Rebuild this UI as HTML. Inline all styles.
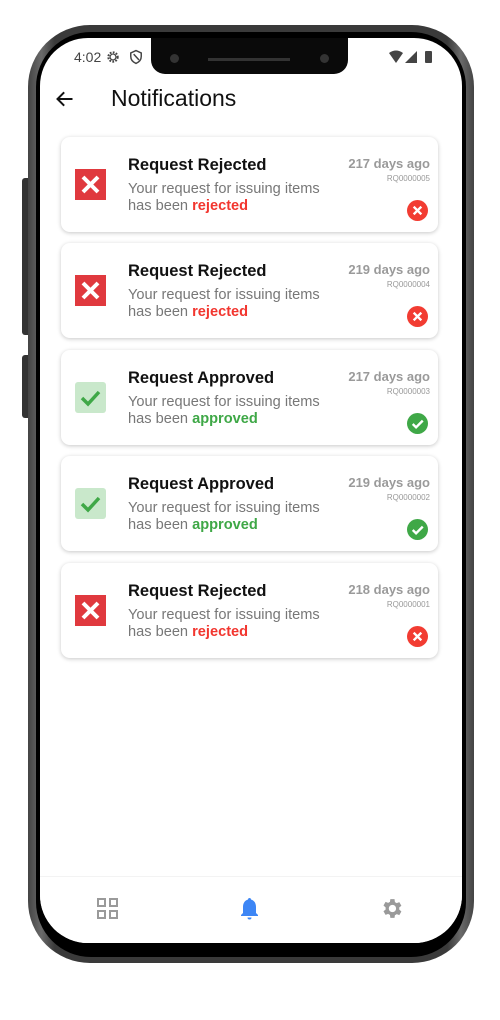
<!DOCTYPE html>
<html><head><meta charset="utf-8"><style>
*{margin:0;padding:0;box-sizing:border-box}
body{width:500px;height:1020px;background:#fff;position:relative;overflow:hidden;font-family:"Liberation Sans",sans-serif}
.abs{position:absolute}
.card{position:absolute;left:61px;width:377px;height:95px;background:#fff;border-radius:9px;box-shadow:0 1px 4px rgba(0,0,0,.22)}
.ic{position:absolute;left:14px;top:32px;width:31px;height:31px}
.t{position:absolute;left:67px;top:19px;font-size:16.5px;font-weight:bold;color:#111}
.s{position:absolute;left:67px;top:44px;font-size:14.6px;line-height:17px;color:#777}
.r{color:#f2362f;font-weight:bold}.g{color:#3fa847;font-weight:bold}
.d{position:absolute;right:8px;top:19px;font-size:13px;color:#9a9a9a;font-weight:bold}
.q{position:absolute;right:8px;top:37px;font-size:8px;color:#999}
.st{position:absolute;right:10px;top:63px;width:21px;height:21px}
</style></head><body>
<div class="abs" style="left:22px;top:178px;width:10px;height:157px;background:#333;border-radius:3px"></div>
<div class="abs" style="left:22px;top:355px;width:10px;height:63px;background:#333;border-radius:3px"></div>
<div class="abs" style="left:28px;top:25px;width:446px;height:938px;background:linear-gradient(90deg,#444,#6a6a6a 3%,#3a3a3a 6%,#3a3a3a 94%,#6a6a6a 97%,#444);border-radius:62px"></div>
<div class="abs" style="left:36px;top:32px;width:430px;height:925px;background:#000;border-radius:55px"></div>
<div class="abs" style="left:40px;top:38px;width:422px;height:905px;background:#fff;border-radius:48px;overflow:hidden">
 <div class="abs" style="left:0;top:838px;width:422px;height:67px;background:#fff;border-top:1px solid #f3f3f3"></div>
</div>
<div class="abs" style="left:151px;top:38px;width:197px;height:36px;background:#0a0a0a;border-radius:0 0 14px 14px"></div>
<div class="abs" style="left:170px;top:54px;width:9px;height:9px;border-radius:50%;background:#333"></div>
<div class="abs" style="left:320px;top:54px;width:9px;height:9px;border-radius:50%;background:#333"></div>
<div class="abs" style="left:208px;top:58px;width:82px;height:3px;background:#333"></div>
<div class="abs" style="left:74px;top:49px;font-size:14px;color:#444">4:02</div>
<svg class="abs" style="left:106px;top:50px" width="14" height="14" viewBox="0 0 24 24"><circle cx="12" cy="12" r="8" fill="none" stroke="#444" stroke-width="3.5" stroke-dasharray="3 2.3"/><circle cx="12" cy="12" r="5" fill="none" stroke="#444" stroke-width="2"/></svg>
<svg class="abs" style="left:129px;top:49px" width="14" height="16" viewBox="0 0 24 26"><path d="M12 2L3 6v6c0 6 4 10 9 12 5-2 9-6 9-12V6z" fill="none" stroke="#444" stroke-width="2.5"/><path d="M8 8l9 10" stroke="#444" stroke-width="2.5"/></svg>
<svg class="abs" style="left:389px;top:50px" width="48" height="14" viewBox="0 0 48 14"><path d="M0 3Q7-2 14 3L7 13z" fill="#444"/><path d="M16 13L28 1V13z" fill="#444"/><rect x="36" y="1" width="7" height="12" rx="1" fill="#444"/></svg>
<svg class="abs" style="left:55px;top:89px" width="20" height="20" viewBox="0 0 24 24"><path d="M21 12H4M11 4l-8 8 8 8" fill="none" stroke="#111" stroke-width="2.4"/></svg>
<div class="abs" style="left:111px;top:85px;font-size:23px;color:#111">Notifications</div>

<div class="card" style="top:137px"><svg class="ic" viewBox="0 0 31 31"><rect width="31" height="31" fill="#e0393e"/><path d="M8 8l15 15M23 8L8 23" stroke="#fff" stroke-width="4"/></svg><div class="t">Request Rejected</div><div class="s">Your request for issuing items<br>has been <span class="r">rejected</span></div><div class="d">217 days ago</div><div class="q">RQ0000005</div><svg class="st" viewBox="0 0 22 22"><circle cx="11" cy="11" r="11" fill="#f23c32"/><path d="M7 7l8 8M15 7l-8 8" stroke="#fff" stroke-width="2.5"/></svg></div>
<div class="card" style="top:243px"><svg class="ic" viewBox="0 0 31 31"><rect width="31" height="31" fill="#e0393e"/><path d="M8 8l15 15M23 8L8 23" stroke="#fff" stroke-width="4"/></svg><div class="t">Request Rejected</div><div class="s">Your request for issuing items<br>has been <span class="r">rejected</span></div><div class="d">219 days ago</div><div class="q">RQ0000004</div><svg class="st" viewBox="0 0 22 22"><circle cx="11" cy="11" r="11" fill="#f23c32"/><path d="M7 7l8 8M15 7l-8 8" stroke="#fff" stroke-width="2.5"/></svg></div>
<div class="card" style="top:350px"><svg class="ic" viewBox="0 0 31 31"><rect width="31" height="31" rx="3" fill="#c9e8cb"/><path d="M7 16l6 6 11-12" fill="none" stroke="#3fa847" stroke-width="3.5"/></svg><div class="t">Request Approved</div><div class="s">Your request for issuing items<br>has been <span class="g">approved</span></div><div class="d">217 days ago</div><div class="q">RQ0000003</div><svg class="st" viewBox="0 0 22 22"><circle cx="11" cy="11" r="11" fill="#3fa847"/><path d="M6 11.5l3.5 3.5 7-7" fill="none" stroke="#fff" stroke-width="2.5"/></svg></div>
<div class="card" style="top:456px"><svg class="ic" viewBox="0 0 31 31"><rect width="31" height="31" rx="3" fill="#c9e8cb"/><path d="M7 16l6 6 11-12" fill="none" stroke="#3fa847" stroke-width="3.5"/></svg><div class="t">Request Approved</div><div class="s">Your request for issuing items<br>has been <span class="g">approved</span></div><div class="d">219 days ago</div><div class="q">RQ0000002</div><svg class="st" viewBox="0 0 22 22"><circle cx="11" cy="11" r="11" fill="#3fa847"/><path d="M6 11.5l3.5 3.5 7-7" fill="none" stroke="#fff" stroke-width="2.5"/></svg></div>
<div class="card" style="top:563px"><svg class="ic" viewBox="0 0 31 31"><rect width="31" height="31" fill="#e0393e"/><path d="M8 8l15 15M23 8L8 23" stroke="#fff" stroke-width="4"/></svg><div class="t">Request Rejected</div><div class="s">Your request for issuing items<br>has been <span class="r">rejected</span></div><div class="d">218 days ago</div><div class="q">RQ0000001</div><svg class="st" viewBox="0 0 22 22"><circle cx="11" cy="11" r="11" fill="#f23c32"/><path d="M7 7l8 8M15 7l-8 8" stroke="#fff" stroke-width="2.5"/></svg></div>

<svg class="abs" style="left:97px;top:898px" width="21" height="21" viewBox="0 0 21 21"><g fill="none" stroke="#9a9a9a" stroke-width="2"><rect x="1" y="1" width="7" height="7"/><rect x="13" y="1" width="7" height="7"/><rect x="1" y="13" width="7" height="7"/><rect x="13" y="13" width="7" height="7"/></g></svg>
<svg class="abs" style="left:240px;top:897px" width="19" height="24" viewBox="0 0 19 24"><path d="M9.5 1c-1 0-1.5.7-1.5 1.5C4.5 3.5 3 6.5 3 10v6l-2 2v1h17v-1l-2-2v-6c0-3.5-1.5-6.5-5-7.5C11 1.7 10.5 1 9.5 1z" fill="#3d86f5"/><path d="M7.5 20.5h4a2 2 0 01-4 0z" fill="#3d86f5"/></svg>
<svg class="abs" style="left:379px;top:896px" width="25" height="25" viewBox="0 0 24 24"><path fill="#9a9a9a" d="M19.4 13c.04-.33.06-.66.06-1s-.02-.67-.06-1l2.1-1.650-2-3.46-2.5 1a7.3 7.3 0 00-1.7-1L14.9 3h-4l-.4 2.65c-.6.25-1.2.6-1.7 1l-2.5-1-2 3.46L6.4 11c-.04.33-.06.66-.06 1s.02.67.06 1l-2.1 1.65 2 3.46 2.5-1c.5.4 1.1.75 1.7 1L10.9 21h4l.4-2.65c.6-.25 1.200-.6 1.7-1l2.5 1 2-3.46zM12.9 15.5a3.5 3.5 0 110-7 3.5 3.5 0 010 7z"/></svg>
</body></html>
